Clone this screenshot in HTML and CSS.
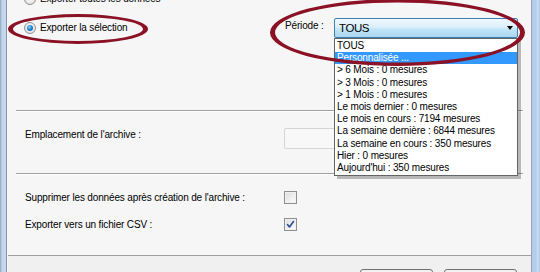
FILE: index.html
```html
<!DOCTYPE html>
<html lang="fr">
<head>
<meta charset="utf-8">
<title>Export</title>
<link rel="stylesheet" href="styles.css">
</head>
<body>
<div class="window">
  <div class="frame-left"></div>
  <div class="panel">
    <div class="top">
      <div class="radios">
        <label class="radio-row"><span class="radio"></span><span class="lbl">Exporter toutes les données</span></label>
        <label class="radio-row"><span class="radio checked"></span><span class="lbl">Exporter la sélection</span></label>
      </div>
      <div class="period">
        <span class="period-label">Période :</span>
        <div class="combo">
          <span class="combo-text">TOUS</span>
          <span class="combo-arrow"></span>
          <ul class="combo-list">
            <li>TOUS</li>
            <li class="sel">Personnalisée ...</li>
            <li>&gt; 6 Mois : 0 mesures</li>
            <li>&gt; 3 Mois : 0 mesures</li>
            <li>&gt; 1 Mois : 0 mesures</li>
            <li>Le mois dernier : 0 mesures</li>
            <li>Le mois en cours : 7194 mesures</li>
            <li>La semaine dernière : 6844 mesures</li>
            <li>La semaine en cours : 350 mesures</li>
            <li>Hier : 0 mesures</li>
            <li>Aujourd'hui : 350 mesures</li>
          </ul>
        </div>
      </div>
    </div>
    <div class="sep"></div>
    <div class="archive">
      <span class="field-label">Emplacement de l'archive :</span>
      <div class="input"></div>
    </div>
    <div class="sep"></div>
    <div class="options">
      <div class="opt-row"><span class="field-label">Supprimer les données après création de l'archive :</span><span class="check"></span></div>
      <div class="opt-row"><span class="field-label">Exporter vers un fichier CSV :</span><span class="check checked"><svg viewBox="0 0 11 11" width="11" height="11"><path d="M2.5 5.5 L4.5 8 L8.5 2.5" fill="none" stroke="#2a4f9a" stroke-width="1.6" stroke-linejoin="round" stroke-linecap="round"/></svg></span></div>
    </div>
    <div class="footer">
      <span class="btn"></span>
      <span class="btn"></span>
    </div>
  </div>
  <div class="frame-right"></div>
</div>
<svg class="marks" width="540" height="272" viewBox="0 0 540 272">
  <path fill="#8a1224" fill-rule="evenodd" d="M8 29 a70 15 0 1 0 140 0 a70 15 0 1 0 -140 0 Z M13 29 a65 12 0 1 0 130 0 a65 12 0 1 0 -130 0 Z"/>
  <path fill="#8a1224" fill-rule="evenodd" d="M270 32.5 a127.5 33.5 0 1 0 255 0 a127.5 33.5 0 1 0 -255 0 Z M275 32.5 a122.5 30 0 1 0 245 0 a122.5 30 0 1 0 -245 0 Z"/>
</svg>
</body>
</html>
```
FILE: styles.css
```css
* { box-sizing: border-box; }
html, body { margin: 0; padding: 0; }
body {
  width: 540px;
  height: 272px;
  overflow: hidden;
  position: relative;
  font-family: "Liberation Sans", Arial, sans-serif;
  font-size: 10px;
  color: #000;
  background: #f6f6f6;
}
.window { display: flex; height: 272px; }
.frame-left {
  width: 7px;
  flex: none;
  background: linear-gradient(to right, #9fb2c7 0, #9fb2c7 1px, #c3d8ee 2px, #c3d8ee 6px);
  border-right: 1px solid #8c97a3;
}
.frame-right {
  width: 9px;
  flex: none;
  border-left: 1px solid #9aa3ad;
  background: linear-gradient(to right, #b3cdea 0, #b3cdea 4px, #c9dcf1 5px, #b3cdea 8px);
}
.panel {
  flex: 1;
  display: flex;
  flex-direction: column;
  background: #f6f6f6;
  min-height: 0;
  overflow: hidden;
}
.panel > * { flex: none; }
.top {
  display: flex;
  height: 110px;
  padding-left: 18px;
}
.radios {
  width: 260px;
  flex: none;
  display: flex;
  flex-direction: column;
  gap: 17px;
  margin-top: -7px;
}
.radio-row {
  display: flex;
  align-items: center;
  height: 12px;
  gap: 4px;
  margin-left: -1px;
}
.lbl, .field-label, .period-label {
  line-height: 12px;
  letter-spacing: -0.15px;
  white-space: nowrap;
}
.radio {
  width: 12px;
  height: 12px;
  border-radius: 50%;
  border: 1px solid #8e8f8f;
  background: radial-gradient(circle at 50% 40%, #ffffff 0, #e9e9e9 60%, #d4d4d4 100%);
  display: flex;
  align-items: center;
  justify-content: center;
  flex: none;
}
.radio.checked::after {
  content: "";
  width: 6px;
  height: 6px;
  border-radius: 50%;
  background: radial-gradient(circle at 40% 35%, #8fd4fb 0, #1f87d3 45%, #0d4c86 100%);
}
.period {
  display: flex;
  align-items: flex-start;
  margin-top: 18px;
}
.period-label {
  width: 49px;
  margin-top: 2px;
}
.combo {
  position: relative;
  width: 184px;
  height: 20px;
  border: 1px solid #3c7fb1;
  border-radius: 2px;
  background: linear-gradient(to bottom, #eef7fd 0, #dcf0fb 45%, #c4e5f7 55%, #a9d7f2 100%);
  display: flex;
  align-items: center;
  padding-left: 4px;
}
.combo-text {
  font-size: 11.5px;
  letter-spacing: -0.4px;
  flex: 1;
  line-height: 14px;
}
.combo-arrow {
  width: 0;
  height: 0;
  border-left: 3.5px solid transparent;
  border-right: 3.5px solid transparent;
  border-top: 4px solid #000;
  margin-right: 4px;
}
.combo-list {
  position: absolute;
  top: 19px;
  left: -1px;
  width: 184px;
  margin: 0;
  padding: 1px 0;
  list-style: none;
  background: #fff;
  border: 1px solid #646464;
  box-shadow: 3px 3px 0 rgba(0, 0, 0, 0.25);
  z-index: 5;
}
.combo-list li {
  height: 12.2px;
  line-height: 12.2px;
  padding-left: 2px;
  letter-spacing: -0.15px;
  white-space: nowrap;
}
.combo-list li.sel {
  background: #3399ff;
  color: #fff;
}
.sep {
  height: 2px;
  margin: 0 8px 0 9px;
  border-top: 1px solid #a0a0a0;
  border-bottom: 1px solid #ffffff;
}
.archive {
  display: flex;
  align-items: flex-start;
  height: 61px;
  padding: 16px 0 0 18px;
}
.field-label {
  width: 259px;
  flex: none;
}
.archive .field-label { margin-top: 1px; }
.input {
  width: 220px;
  height: 21px;
  border: 1px solid #d5d5d5;
  border-radius: 2px;
  background: #f8f8f8;
}
.options {
  height: 80px;
  padding: 16px 0 0 18px;
  display: flex;
  flex-direction: column;
  gap: 14px;
}
.opt-row {
  display: flex;
  align-items: center;
  height: 13px;
}
.check {
  width: 13px;
  height: 13px;
  border: 1px solid #8e8f8f;
  background: linear-gradient(135deg, #dcdcdc 0, #f4f4f4 70%, #ffffff 100%);
  box-shadow: inset 0 0 0 1px #f0f0f0;
  display: flex;
  align-items: center;
  justify-content: center;
  flex: none;
}
.check svg { display: block; }
.footer {
  height: 40px;
  border-top: 1px solid #a0a0a0;
  background: #f0f0f0;
  display: flex;
  justify-content: flex-end;
  align-items: flex-start;
  gap: 11px;
  padding: 13px 14px 0 0;
  margin-left: 1px;
}
.btn {
  width: 73px;
  height: 23px;
  flex: none;
  border: 1px solid #707070;
  border-radius: 3px;
  background: linear-gradient(to bottom, #f2f2f2, #ebebeb 50%, #dddddd 51%, #cfcfcf);
}
.marks {
  position: absolute;
  left: 0;
  top: 0;
  z-index: 10;
  pointer-events: none;
}
```
